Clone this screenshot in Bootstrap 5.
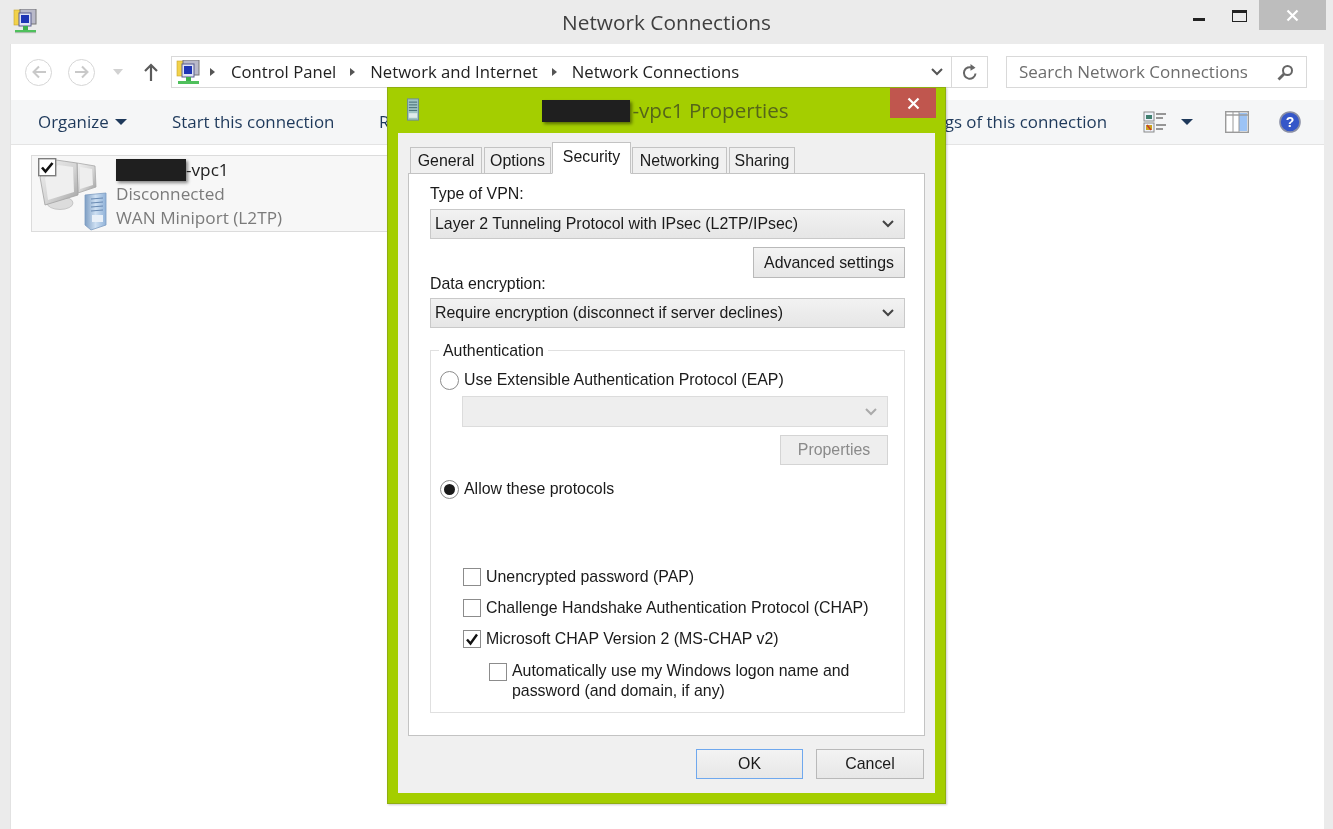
<!DOCTYPE html>
<html lang="en">
<head>
<meta charset="utf-8">
<title>Network Connections</title>
<link href="https://cdn.jsdelivr.net/npm/bootstrap@5.3.0/dist/css/bootstrap.min.css" rel="stylesheet">
<style>
html,body{height:100%;margin:0;overflow:hidden;background:#fff}
body{font-family:"Open Sans","Liberation Sans",sans-serif;color:#222}
.scene{position:relative;width:1333px;height:829px;overflow:hidden;filter:blur(.45px);background:#fff}
.shell{height:829px;background:#ebebeb;display:flex;flex-direction:column;padding:0 9px 0 10px}
.shell-top{height:44px;position:relative;flex:none}
.app-ico{position:absolute;left:3px;top:9px}
.shell-title{font-size:20.8px;color:#3f3f3f;text-align:center;line-height:44px;margin-left:-1px}
.winctl{position:absolute;right:-2px;top:0;display:flex;align-items:flex-start}
.w-min{width:12px;height:3px;background:#222;margin:18px 27px 0 0}
.w-max{width:15px;height:12px;border:1.5px solid #222;border-top-width:3px;margin:10px 12px 0 0}
.w-close{width:67px;height:30px;background:#bdbdbd;color:#fff;display:flex;align-items:center;justify-content:center}
.shell-main{flex:1;background:#fff;display:flex;flex-direction:column;min-height:0;border-left:1px solid #e2e2e2}
.nav-row{height:56px;display:flex;align-items:center;padding-left:14px;flex:none}
.round-btn{width:27px;height:27px;border:1.5px solid #d6d6d6;border-radius:50%;display:flex;align-items:center;justify-content:center}
.nav-down{margin-left:18px}
.nav-up{margin-left:21px}
.addr{height:32px;width:817px;border:1px solid #d9d9d9;margin-left:13px;display:flex;align-items:center;font-size:16.7px;color:#222}
.addr-ico{margin:0 10px 0 4px}
.crumb{margin-right:14px}
.tri{width:0;height:0;border-left:5px solid #555;border-top:4.5px solid transparent;border-bottom:4.5px solid transparent;margin-right:15px}
.tri-first{margin-right:16px}
.addr-end{margin-left:auto;display:flex;height:100%;align-items:center}
.addr-refresh{width:36px;height:100%;border-left:1px solid #d9d9d9;display:flex;align-items:center;justify-content:center}
.srch{height:32px;width:301px;margin-left:18px;border:1px solid #d9d9d9;display:flex;align-items:center;justify-content:space-between;padding:0 12px;font-size:17px;color:#6d6d6d}
.cmd{height:45px;background:#f5f6f7;border-bottom:1px solid #e4e4e4;display:flex;align-items:center;font-size:16.9px;color:#1e395b;position:relative;flex:none;white-space:nowrap}
.cmd-org{margin-left:27px;display:flex;align-items:center;width:134px}
.cmd-caret{width:0;height:0;border-top:6px solid #1e395b;border-left:6px solid transparent;border-right:6px solid transparent;margin-left:6px}
.cmd-caret-view{margin:0 32px 0 14px}
.cmd-start{width:207px}
.cmd-tools{margin-left:auto;display:flex;align-items:center}
.cmd-last{margin-right:36px}
.cmd-help{margin:0 23px 0 30px}
.conn{margin:10px 0 0 20px;width:370px;height:77px;background:#f7f7f7;border:1px solid #dcdcdc;position:relative;display:flex}
.conn-ico{position:absolute;left:0;top:0}
.conn-txt{margin-left:84px;font-size:17.2px;line-height:24px;padding-top:2px;color:#7b7b7b}
.conn-name{color:#222;display:flex;align-items:center}
.redact{display:inline-block;background:#1f1f1f;box-shadow:2px 2px 3px rgba(0,0,0,.45)}
.r-a{width:70px;height:22px}
.r-b{width:88px;height:22px;margin-right:2px}
.dlg{position:absolute;left:387px;top:87px;width:559px;height:717px;background:#a4ce00;border:1px solid #8fae10;box-shadow:1px 1px 2px rgba(0,0,0,.2);display:flex;flex-direction:column;padding:0 10px 10px}
.dlg-head{height:45px;flex:none;position:relative;display:flex;align-items:center;justify-content:center;font-size:20.6px;color:#55651a;padding:0 2px 0 0}
.dlg-ico{position:absolute;left:9px;top:10px}
.dlg-x{position:absolute;right:-1px;top:0;width:46px;height:30px;background:#c0564e;display:flex;align-items:center;justify-content:center}
.dlg-body{flex:1;background:#f0f0f0;padding:10px 10px 14px;display:flex;flex-direction:column;min-height:0;font-family:"Liberation Sans",sans-serif;font-size:15.9px;color:#1a1a1a}
.tabs{display:flex;align-items:flex-end;padding-left:2px;height:31px;flex:none;position:relative;z-index:2;margin-bottom:-1px}
.tb{height:27px;border:1.5px solid #c3c3c3;border-bottom:1px solid #c3c3c3;background:#f0f0f0;display:flex;align-items:center;justify-content:center;margin-right:2px}
.tb-on{height:32px;background:#fff;border-bottom-color:#fff;margin:0 1px 0 -1px;padding-bottom:2px}
.tw-g{width:72px}.tw-o{width:67px}.tw-s{width:79px}.tw-n{width:95px}.tw-h{width:66px}
.pane{height:563px;flex:none;background:#fff;border:1.5px solid #c3c3c3;padding:10px 19px 0 21px}
.lbl{line-height:20px}
.xsel{height:30px;border:1.5px solid #c9c9c9;background:linear-gradient(#f2f2f2,#e6e6e6);display:flex;align-items:center;justify-content:space-between;padding:0 10px 0 4px;margin-top:5px;color:#1a1a1a}
.xsel-b{margin-top:4px}
.xsel-dis{background:#eee;border-color:#dcdcdc;height:31px;margin:6px 0 0 22px;width:426px;justify-content:flex-end}
.xbtn{border:1.5px solid #b9b9b9;background:linear-gradient(#f3f3f3,#e7e7e7);border-radius:0;color:#1a1a1a;font-size:15.9px;padding:0;height:31px;line-height:1;display:flex;align-items:center;justify-content:center}
.xbtn-adv{width:152px;margin:8px 0 -4px auto}
.xbtn-dis{width:108px;margin:8px 0 0 auto;color:#8a8a8a;border-color:#d4d4d4;background:#eee;height:30px}
.xbtn-ok{width:107px;border-color:#6fa8ee}
.xbtn-cancel{width:108px}
.grp{margin-top:22px;height:363px;border:1.5px solid #e0e0e0;position:relative;padding:19px 16px 0 9px}
.legend-x{position:absolute;left:8px;top:-10px;background:#fff;padding:0 4px;line-height:20px}
.opt{display:flex;align-items:center;gap:5px;line-height:20px}
.opt-allow{margin-top:14px}
.rad{width:19px;height:19px;border:1.5px solid #8c8c8c;border-radius:50%;background:#fff;flex:none;display:flex;align-items:center;justify-content:center}
.rad-dot{width:11px;height:11px;border-radius:50%;background:#1a1a1a}
.chk{width:18px;height:18px;border:1.5px solid #8c8c8c;background:#fff;flex:none;display:flex;align-items:center;justify-content:center}
.chks{margin-top:68px;padding-left:23px;display:flex;flex-direction:column;gap:11px}
.opt-sub{align-items:flex-start;margin-left:26px;margin-top:1px}
.opt-sub .chk{margin-top:2px}
.foot{display:flex;justify-content:flex-end;gap:13px;margin-top:13px;padding-right:1px;height:30px}
.foot .xbtn{height:30px}
</style>
</head>
<body>
<div class="scene">
  <div class="shell">
    <div class="shell-top">
      <svg class="app-ico" width="24" height="25" viewBox="0 0 24 25"><rect x="1" y="1" width="9" height="15" fill="#f2d24b" stroke="#c7a52c" stroke-width=".6"/><rect x="7" y="0" width="16" height="15" fill="#b9b9c9" stroke="#777"/><rect x="6" y="4" width="12" height="13" fill="#dfe3f4" stroke="#5a5f90"/><rect x="8" y="6" width="8" height="8" fill="#1e35b5"/><rect x="10" y="17" width="5" height="4" fill="#3fb04d"/><rect x="2" y="21" width="21" height="3" fill="#4fc05c"/><rect x="2" y="23.2" width="21" height="1" fill="#bbb"/></svg>
      <div class="shell-title">Network Connections</div>
      <div class="winctl"><div class="w-min"></div><div class="w-max"></div><div class="w-close"><svg width="13" height="13" viewBox="0 0 13 13"><path d="M1.500 1.500l10 10M11.500 1.500l-10 10" stroke="#fff" stroke-width="2.200"/></svg></div></div>
    </div>
    <div class="shell-main">
      <div class="nav-row">
        <div class="round-btn"><svg width="16" height="14" viewBox="0 0 16 14"><path d="M15 7H3M8 1.500L2.500 7 8 12.500" fill="none" stroke="#c9c9c9" stroke-width="2"/></svg></div>
        <div class="round-btn ms-3"><svg width="16" height="14" viewBox="0 0 16 14"><path d="M1 7h12M8 1.500L13.500 7 8 12.500" fill="none" stroke="#c9c9c9" stroke-width="2"/></svg></div>
        <svg class="nav-down" width="10" height="6" viewBox="0 0 10 6"><path d="M0 0h10L5 6z" fill="#d2d2d2"/></svg>
        <svg class="nav-up" width="14" height="18" viewBox="0 0 14 18"><path d="M7 18V2M1 8l6-6 6 6" fill="none" stroke="#5b5b5b" stroke-width="2.200"/></svg>
        <div class="addr">
          <svg class="addr-ico" width="24" height="25" viewBox="0 0 24 25"><rect x="1" y="1" width="9" height="15" fill="#f2d24b" stroke="#c7a52c" stroke-width=".6"/><rect x="7" y="0" width="16" height="15" fill="#b9b9c9" stroke="#777"/><rect x="6" y="4" width="12" height="13" fill="#dfe3f4" stroke="#5a5f90"/><rect x="8" y="6" width="8" height="8" fill="#1e35b5"/><rect x="10" y="17" width="5" height="4" fill="#3fb04d"/><rect x="2" y="21" width="21" height="3" fill="#4fc05c"/></svg>
          <span class="tri tri-first"></span><span class="crumb">Control Panel</span><span class="tri"></span><span class="crumb">Network and Internet</span><span class="tri"></span><span>Network Connections</span>
          <div class="addr-end">
            <svg class="me-2" width="12" height="8" viewBox="0 0 12 8"><path d="M1 1l5 5 5-5" fill="none" stroke="#555" stroke-width="2"/></svg>
            <div class="addr-refresh"><svg width="16" height="17" viewBox="0 0 16 17"><path d="M13.500 9.500a5.800 5.800 0 1 1-3-5.600" fill="none" stroke="#666" stroke-width="2"/><path d="M8.500 0l5 3.800-5 3z" fill="#666"/></svg></div>
          </div>
        </div>
        <div class="srch"><span>Search Network Connections</span><svg width="17" height="17" viewBox="0 0 17 17"><circle cx="10.500" cy="6.500" r="4.500" fill="none" stroke="#666" stroke-width="2"/><path d="M7 10l-5.500 5.500" stroke="#666" stroke-width="2.800"/></svg></div>
      </div>
      <div class="cmd">
        <div class="cmd-org">Organize<span class="cmd-caret"></span></div>
        <div class="cmd-start">Start this connection</div>
        <div>Rename this connection</div>
        <div class="cmd-tools">
          <span class="cmd-last">Change settings of this connection</span>
          <svg width="24" height="24" viewBox="0 0 24 24"><rect x="1" y="2" width="10" height="9" fill="#eef2fa" stroke="#8a8a8a"/><rect x="3" y="5" width="6" height="4" fill="#3f7f6f"/><rect x="1" y="13" width="10" height="9" fill="#eef2fa" stroke="#8a8a8a"/><rect x="3" y="15" width="6" height="5" fill="#c9a21f"/><path d="M4 15l4 5" stroke="#c53a2a" stroke-width="1.500"/><path d="M13 4h10M13 8h7M13 15h10M13 19h7" stroke="#777" stroke-width="1.400"/></svg>
          <span class="cmd-caret cmd-caret-view"></span>
          <svg width="24" height="22" viewBox="0 0 24 22"><rect x=".7" y=".7" width="22.600" height="20.600" fill="#fff" stroke="#9a9a9a" stroke-width="1.400"/><rect x="14" y="2" width="8" height="18" fill="#9cc3f5"/><path d="M8 1v20M14 1v20" stroke="#9a9a9a"/><path d="M1 4h22" stroke="#9a9a9a" stroke-width="1.400"/></svg>
          <svg class="cmd-help" width="22" height="22" viewBox="0 0 22 22"><circle cx="11" cy="11" r="10" fill="#3557c9" stroke="#8a8fa5" stroke-width="1.600"/><text x="11" y="16" text-anchor="middle" font-family="Liberation Sans" font-weight="700" font-size="14" fill="#fff">?</text></svg>
        </div>
      </div>
      <div class="conn">
        <svg class="conn-ico" width="80" height="76" viewBox="0 0 80 76">
          <defs>
            <linearGradient id="sil" x1="0" y1="0" x2="1" y2="1"><stop offset="0" stop-color="#efefef"/><stop offset=".55" stop-color="#d4d4d4"/><stop offset="1" stop-color="#a0a0a0"/></linearGradient>
            <linearGradient id="srv" x1="0" y1="0" x2="1" y2="0"><stop offset="0" stop-color="#7f9fc4"/><stop offset=".5" stop-color="#cddff2"/><stop offset="1" stop-color="#90b2d8"/></linearGradient>
          </defs>
          <path d="M45 7l18 3 1 21-18 6z" fill="url(#sil)" stroke="#a8a8a8" stroke-width=".8"/>
          <path d="M48 11l12 2 1 16-13 4z" fill="#eeeeee"/>
          <ellipse cx="28" cy="47" rx="13" ry="6.500" fill="#dcdcdc" stroke="#bdbdbd" stroke-width=".8"/>
          <path d="M24 4l21 3 1 32-33 10-5-28z" fill="url(#sil)" stroke="#a2a2a2" stroke-width=".8"/>
          <path d="M26 9l15 2 1 25-26 8-3-22z" fill="#efefef"/>
          <path d="M53 39l21-2v32l-15 5-6-5z" fill="url(#srv)" stroke="#7c9cc2" stroke-width=".8"/>
          <path d="M59 43l12-1M59 47l12-1M59 51l12-1M59 55l12-1" stroke="#5d80ab" stroke-width=".9"/>
          <rect x="60" y="59" width="11" height="7" fill="#e9f0f8"/>
          <rect x="6.700" y="2.700" width="17" height="17" fill="#fff" stroke="#7d7d7d" stroke-width="1.400"/>
          <path d="M10 11.500l3.500 4L20.500 7" fill="none" stroke="#111" stroke-width="2.600"/>
        </svg>
        <div class="conn-txt">
          <div class="conn-name"><span class="redact r-a"></span>-vpc1</div>
          <div>Disconnected</div>
          <div>WAN Miniport (L2TP)</div>
        </div>
      </div>
    </div>
  </div>

  <div class="dlg">
    <div class="dlg-head">
      <svg class="dlg-ico" width="12" height="23" viewBox="0 0 13 24"><rect x=".5" y=".5" width="12" height="23" fill="#9fc3c3" stroke="#6c8c90"/><path d="M2 4h9M2 7h9M2 10h9M2 13h9" stroke="#3f6670"/><rect x="2" y="16" width="9" height="5" fill="#dfeaea"/></svg>
      <span class="redact r-b"></span><span>-vpc1 Properties</span>
      <div class="dlg-x"><svg width="13" height="13" viewBox="0 0 13 13"><path d="M1.500 1.500l10 10M11.500 1.500l-10 10" stroke="#fff" stroke-width="2.200"/></svg></div>
    </div>
    <div class="dlg-body">
      <div class="tabs">
        <div class="tb tw-g">General</div>
        <div class="tb tw-o">Options</div>
        <div class="tb tb-on tw-s">Security</div>
        <div class="tb tw-n">Networking</div>
        <div class="tb tw-h">Sharing</div>
      </div>
      <div class="pane">
        <div class="lbl">Type of VPN:</div>
        <div class="xsel"><span>Layer 2 Tunneling Protocol with IPsec (L2TP/IPsec)</span><svg width="12" height="8" viewBox="0 0 12 8"><path d="M1 1l5 5 5-5" fill="none" stroke="#444" stroke-width="2"/></svg></div>
        <button type="button" class="btn xbtn xbtn-adv">Advanced settings</button>
        <div class="lbl">Data encryption:</div>
        <div class="xsel xsel-b"><span>Require encryption (disconnect if server declines)</span><svg width="12" height="8" viewBox="0 0 12 8"><path d="M1 1l5 5 5-5" fill="none" stroke="#444" stroke-width="2"/></svg></div>
        <div class="grp">
          <div class="legend-x">Authentication</div>
          <div class="opt"><span class="rad"></span>Use Extensible Authentication Protocol (EAP)</div>
          <div class="xsel xsel-dis"><svg width="12" height="8" viewBox="0 0 12 8"><path d="M1 1l5 5 5-5" fill="none" stroke="#aaa" stroke-width="2"/></svg></div>
          <button type="button" class="btn xbtn xbtn-dis">Properties</button>
          <div class="opt opt-allow"><span class="rad"><span class="rad-dot"></span></span>Allow these protocols</div>
          <div class="chks">
            <div class="opt"><span class="chk"></span>Unencrypted password (PAP)</div>
            <div class="opt"><span class="chk"></span>Challenge Handshake Authentication Protocol (CHAP)</div>
            <div class="opt"><span class="chk"><svg width="14" height="14" viewBox="0 0 14 14"><path d="M2 7.500l3.500 4L12 2.500" fill="none" stroke="#111" stroke-width="2.400"/></svg></span>Microsoft CHAP Version 2 (MS-CHAP v2)</div>
            <div class="opt opt-sub"><span class="chk"></span><span>Automatically use my Windows logon name and<br>password (and domain, if any)</span></div>
          </div>
        </div>
      </div>
      <div class="foot">
        <button type="button" class="btn xbtn xbtn-ok">OK</button>
        <button type="button" class="btn xbtn xbtn-cancel">Cancel</button>
      </div>
    </div>
  </div>
</div>
<script src="https://cdn.jsdelivr.net/npm/bootstrap@5.3.0/dist/js/bootstrap.bundle.min.js"></script>
</body>
</html>
